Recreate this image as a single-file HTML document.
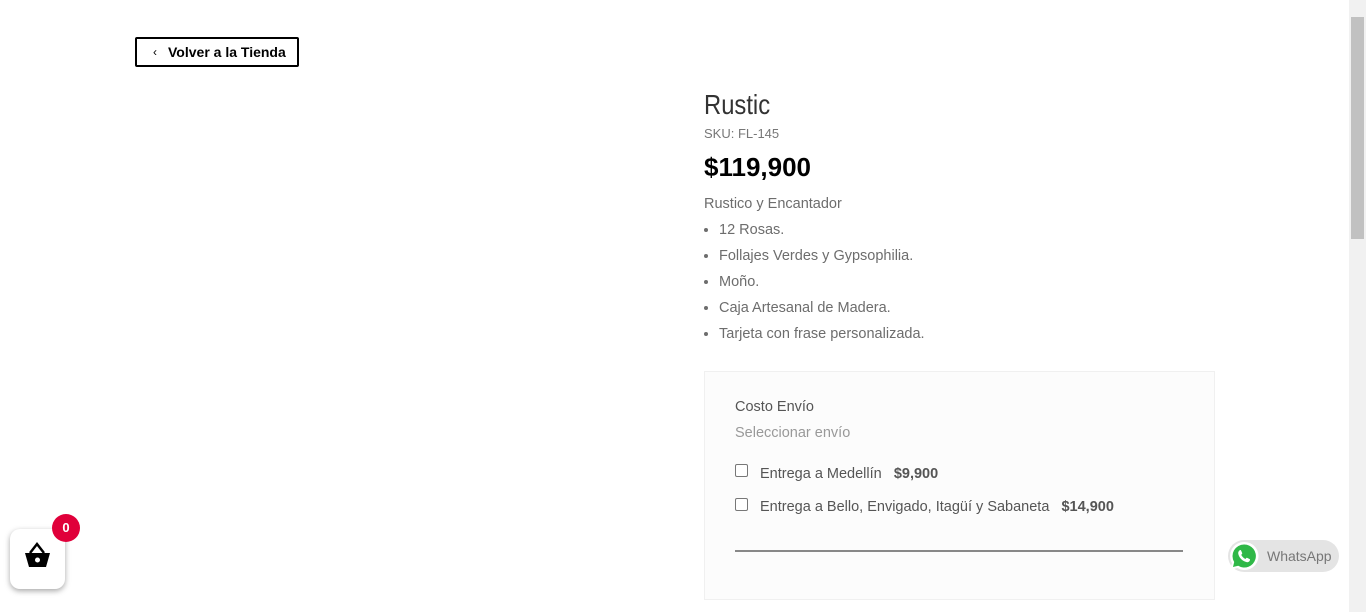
<!DOCTYPE html>
<html><head><meta charset="utf-8"><style>
html,body{margin:0;padding:0;width:1366px;height:612px;overflow:hidden;background:#fff;font-family:"Liberation Sans",sans-serif;}
.abs{position:absolute;}
.btn{left:135px;top:37px;width:160px;height:26px;border:2px solid #000;border-radius:2px;font-size:14px;color:#000;line-height:26px;font-weight:bold;}
.txt{color:#6d6d6d;font-size:14.5px;}
ul{margin:0;padding-left:15px;}
li{height:26px;line-height:26px;font-size:14.5px;color:#6d6d6d;}
.sb{left:1349px;top:0;width:17px;height:612px;background:#f1f1f1;}
</style></head><body>
<div class="abs btn"><span style="position:absolute;left:16px;font-size:12px;font-weight:normal">‹</span><span style="position:absolute;left:31px;">Volver a la Tienda</span></div>
<div class="abs" style="left:704px;top:89px;font-size:28px;color:#333;transform:scaleX(0.85);transform-origin:left">Rustic</div>
<div class="abs" style="left:704px;top:126px;font-size:13px;color:#777">SKU: FL-145</div>
<div class="abs" style="left:704px;top:152px;font-size:26px;font-weight:bold;color:#000">$119,900</div>
<div class="abs txt" style="left:704px;top:196px">Rustico y Encantador</div>
<div class="abs" style="left:704px;top:217px"><ul>
<li>12 Rosas.</li><li>Follajes Verdes y Gypsophilia.</li><li>Moño.</li><li>Caja Artesanal de Madera.</li><li>Tarjeta con frase personalizada.</li></ul></div>
<div class="abs" style="left:704px;top:371px;width:509px;height:227px;background:#fcfcfc;border:1px solid #f0f0f0"></div>
<div class="abs txt" style="left:735px;top:399px;color:#555">Costo Envío</div>
<div class="abs txt" style="left:735px;top:425px;color:#999">Seleccionar envío</div>
<div class="abs" style="left:735px;top:464px;width:11px;height:11px;border:1px solid #777;border-radius:2px;background:#fff"></div>
<div class="abs txt" style="left:760px;top:466px;color:#555">Entrega a Medellín &nbsp; <b>$9,900</b></div>
<div class="abs" style="left:735px;top:498px;width:11px;height:11px;border:1px solid #777;border-radius:2px;background:#fff"></div>
<div class="abs txt" style="left:760px;top:499px;color:#555">Entrega a Bello, Envigado, Itagüí y Sabaneta &nbsp; <b>$14,900</b></div>
<div class="abs" style="left:735px;top:550px;width:448px;height:2px;background:#888"></div>
<div class="abs" style="left:10px;top:529px;width:55px;height:60px;background:#fff;border-radius:10px;box-shadow:0 2px 6px rgba(0,0,0,.35)">
<svg width="55" height="60" viewBox="0 0 55 60"><path d="M20 24 L27 15 L34 24" stroke="#000" stroke-width="2.5" fill="none"/><path d="M15 24 H40 L36 38 H19 Z" fill="#000"/><circle cx="27.5" cy="31" r="2.5" fill="#fff"/></svg></div>
<div class="abs" style="left:52px;top:514px;width:28px;height:28px;border-radius:50%;background:#e0003a;color:#fff;font-weight:bold;font-size:13px;text-align:center;line-height:28px">0</div>
<div class="abs" style="left:1228px;top:540px;width:111px;height:32px;border-radius:16px;background:#e4e4e4"></div>
<svg class="abs" style="left:1228px;top:540px" width="32" height="32" viewBox="0 0 32 32"><path d="M16 2a14 14 0 0 0-12 21L2 30l7.3-2A14 14 0 1 0 16 2z" fill="#fff"/><path d="M16 4.5a11.5 11.5 0 0 0-9.8 17.5L5 27l5.2-1.3A11.5 11.5 0 1 0 16 4.5z" fill="#2fb847"/><path d="M12 10c.5 0 1 .2 1.2.8l1 2.3c.1.4 0 .7-.3 1l-.7.8c1 1.8 2.4 3.2 4.2 4.1l.8-.9c.3-.3.6-.4 1-.2l2.3 1.1c.4.2.6.6.5 1-.3 1.4-1.5 2.3-2.9 2.2-4.3-.5-8.4-4.6-8.9-8.9-.1-1.4.8-2.7 1.8-3.3z" fill="#fff"/></svg>
<div class="abs" style="left:1267px;top:548px;font-size:14px;color:#777">WhatsApp</div>
<div class="abs sb"><div style="position:absolute;left:2px;top:17px;width:13px;height:222px;background:#c1c1c1"></div></div>
</body></html>
